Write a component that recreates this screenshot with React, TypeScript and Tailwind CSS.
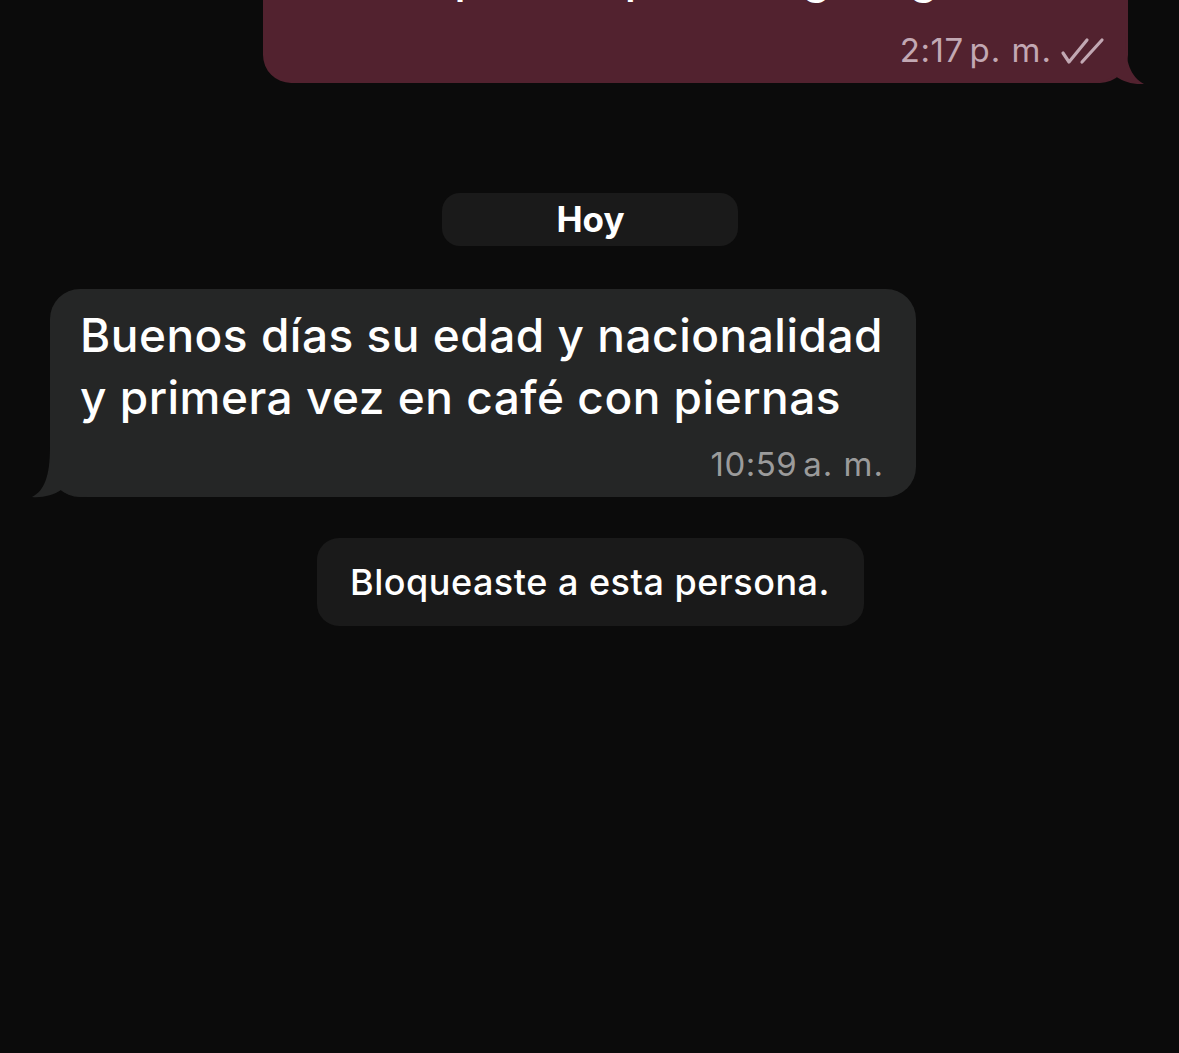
const font = { fontFamily: "Inter, 'Noto Sans', sans-serif" };

function DoubleCheck() {
  return (
    <svg width="46" height="28" viewBox="0 0 46 28" fill="none" className="ml-[8px] shrink-0 block">
      <path d="M3 16 L9 25 L27 3" stroke="#c2a8b3" strokeWidth="3.2" strokeLinecap="round" strokeLinejoin="round" />
      <path d="M22 25 L42 3" stroke="#c2a8b3" strokeWidth="3.2" strokeLinecap="round" />
    </svg>
  );
}

export default function App() {
  return (
    <div className="min-h-[1053px] bg-[#0b0b0b] overflow-hidden flex flex-col" style={font}>
      {/* sent bubble, cut by the top edge */}
      <div className="flex justify-end pr-[51px]">
        <div className="relative w-[865px] -mt-[60px] bg-[#52222f] rounded-[28px] pt-[5px] pb-[14px] pl-[30px] pr-[22px]">
          <svg width="60" height="51" viewBox="0 0 60 51" className="absolute right-[-19px] bottom-[-1px]">
            <path d="M0 50 L0 0 L38 0 C38 30 44 44 57 51 C46 52 34 48 27 42 C22 47 14 50 0 50 Z" fill="#52222f" />
          </svg>
          <p className="relative text-[46px] leading-[62px] text-white font-medium tracking-[0.5px] whitespace-nowrap overflow-hidden">
            esta espera a que te diga algo
          </p>
          <div className="relative mt-[26px] h-[36px] flex items-center justify-end text-[33px] text-[#c2a8b3]">
            <span className="tracking-[0.5px]">2:17</span>
            <span className="ml-[6px] tracking-[1px]">p. m.</span>
            <DoubleCheck />
          </div>
        </div>
      </div>

      {/* date pill */}
      <div className="flex justify-center mt-[110px]">
        <div className="w-[296px] h-[53px] rounded-[18px] bg-[#1a1a1a] flex items-center justify-center pl-[2px]">
          <span className="text-[35px] font-bold text-white">Hoy</span>
        </div>
      </div>

      {/* received bubble */}
      <div className="flex pl-[50px] mt-[43px]">
        <div className="relative w-[866px] bg-[#252626] rounded-[30px] pt-[15px] pb-[14px] pl-[30px] pr-[32px]">
          <svg width="60" height="51" viewBox="0 0 60 51" className="absolute left-[-22px] bottom-[-1px]">
            <path d="M60 50 L60 0 L22 0 C22 30 16 44 4 50 C14 51 26 48 33 43 C38 47 46 50 60 50 Z" fill="#252626" />
          </svg>
          <p className="relative text-[46px] leading-[62px] text-white font-medium tracking-[0.5px] whitespace-nowrap">
            Buenos días su edad y nacionalidad
            <br />y primera vez en café con piernas
          </p>
          <div className="relative mt-[19px] h-[36px] flex items-center justify-end text-[33px] text-[#9b9b9b]">
            <span className="tracking-[0.5px]">10:59</span>
            <span className="ml-[6px] tracking-[1px]">a. m.</span>
          </div>
        </div>
      </div>

      {/* blocked notice */}
      <div className="flex justify-center mt-[41px] pl-[1px]">
        <div className="w-[547px] h-[88px] rounded-[22px] bg-[#1a1a1a] flex items-center justify-center">
          <span className="text-[36px] font-medium text-white tracking-[0.5px]">Bloqueaste a esta persona.</span>
        </div>
      </div>
    </div>
  );
}
